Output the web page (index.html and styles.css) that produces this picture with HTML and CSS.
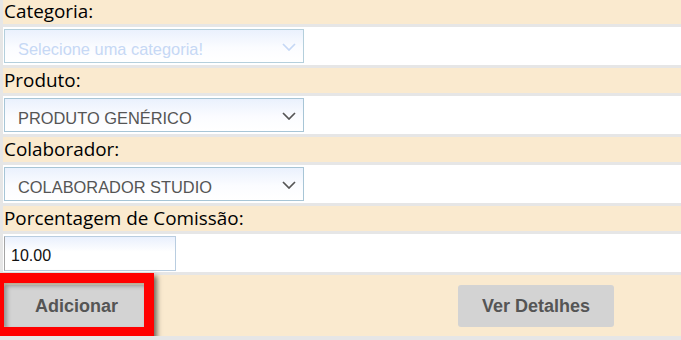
FILE: index.html
```html
<!DOCTYPE html>
<html lang="pt">
<head>
<meta charset="utf-8">
<title>Comissão</title>
<link rel="stylesheet" href="styles.css">
</head>
<body>
<div class="form">
  <div class="label label-first">Categoria:</div>
  <div class="field">
    <div class="select disabled"><span>Selecione uma categoria!</span><svg class="chev" width="14" height="8" viewBox="0 0 14 8"><path d="M1 1 L7 7 L13 1" fill="none" stroke="currentColor" stroke-width="1.7"/></svg></div>
  </div>
  <div class="label">Produto:</div>
  <div class="field">
    <div class="select"><span>PRODUTO GENÉRICO</span><svg class="chev" width="14" height="8" viewBox="0 0 14 8"><path d="M1 1 L7 7 L13 1" fill="none" stroke="currentColor" stroke-width="1.7"/></svg></div>
  </div>
  <div class="label">Colaborador:</div>
  <div class="field">
    <div class="select"><span>COLABORADOR STUDIO</span><svg class="chev" width="14" height="8" viewBox="0 0 14 8"><path d="M1 1 L7 7 L13 1" fill="none" stroke="currentColor" stroke-width="1.7"/></svg></div>
  </div>
  <div class="label">Porcentagem de Comissão:</div>
  <div class="field">
    <div class="input">10.00</div>
  </div>
  <div class="actions">
    <button class="btn btn-add">Adicionar</button>
    <button class="btn btn-details">Ver Detalhes</button>
  </div>
  <div class="highlight"></div>
</div>
</body>
</html>
```

FILE: styles.css
```css
html, body {
  margin: 0;
  padding: 0;
}
body {
  background: #e6e6e6;
  overflow: hidden;
}
.form {
  position: relative;
  display: flex;
  flex-direction: column;
  gap: 3px;
  padding-left: 3px;
}
.label {
  height: 25px;
  background: #faeacf;
  font-family: "Open Sans", "Noto Sans", sans-serif;
  font-size: 18.9px;
  line-height: 25px;
  color: #000;
  padding-left: 1px;
  white-space: nowrap;
}
.label-first {
  height: 24px;
  line-height: 23px;
}
.field {
  height: 38px;
  background: #fff;
  padding-top: 2px;
  padding-left: 1px;
  box-sizing: border-box;
}
.select {
  width: 300px;
  height: 34px;
  box-sizing: border-box;
  border: 1px solid #a7c5d6;
  background: linear-gradient(#eaf1fd 0%, #fbfcff 55%, #ffffff 100%);
  display: flex;
  align-items: flex-start;
  padding: 10px 7px 0 13px;
  font-family: "Liberation Sans", Arial, sans-serif;
  font-size: 16.4px;
  line-height: 18px;
  color: #555;
}
.select.disabled {
  color: #c6d8f5;
  border-color: #b4cfdc;
}
.chev {
  margin-left: auto;
  margin-top: 3px;
  color: #555;
}
.select.disabled .chev {
  color: #c6d8f5;
}
.input {
  width: 172px;
  height: 35px;
  box-sizing: border-box;
  border: 1px solid #b9cde0;
  border-left-color: #a4a4a4;
  background: linear-gradient(#e9f0fd 0%, #ffffff 45%);
  padding: 10px 6px 0 6px;
  font-family: "Liberation Sans", Arial, sans-serif;
  font-size: 16px;
  line-height: 18px;
  color: #111;
}
.actions {
  height: 61px;
  background: #faeacf;
  display: flex;
  align-items: flex-start;
  padding-top: 10px;
  padding-left: 1px;
  box-sizing: border-box;
}
.btn {
  height: 42px;
  border: none;
  border-radius: 3px;
  background: #d3d3d3;
  color: #555;
  font-family: "Liberation Sans", Arial, sans-serif;
  font-weight: bold;
  font-size: 18px;
  padding: 0;
}
.btn-add {
  width: 145px;
}
.btn-details {
  width: 156px;
  margin-left: 309px;
}
.highlight {
  position: absolute;
  left: -3px;
  top: 273px;
  width: 157px;
  height: 67px;
  box-sizing: border-box;
  border-style: solid;
  border-color: #ff0000;
  border-width: 10px 10px 13px 7px;
  box-shadow: 3px 3px 5px rgba(0, 0, 0, 0.55), inset 3px 3px 4px rgba(0, 0, 0, 0.3);
}
```
